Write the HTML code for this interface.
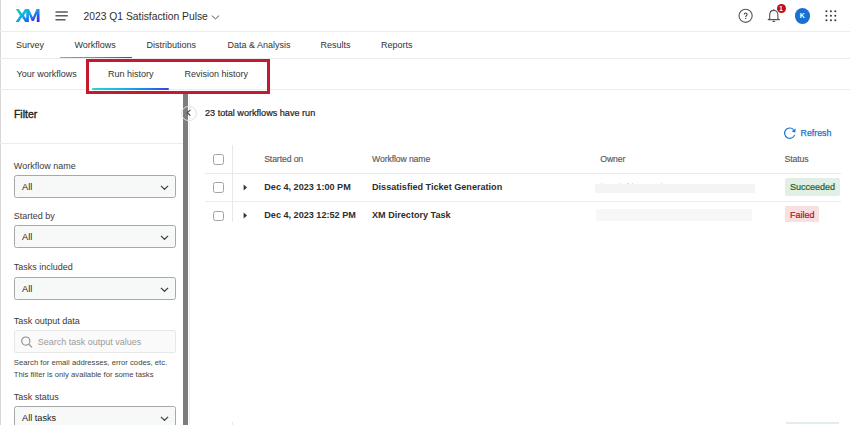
<!DOCTYPE html>
<html><head><meta charset="utf-8">
<style>
*{box-sizing:border-box;margin:0;padding:0}
html,body{width:850px;height:425px;overflow:hidden;background:#fff}
body{position:relative;font-family:"Liberation Sans",sans-serif;color:#2b2b2b}
.a{position:absolute;white-space:nowrap;line-height:1}
.hl{position:absolute;left:0;height:1px;background:#ececec}
.nav{font-size:9px;color:#333}
.lbl{font-size:9px;color:#3a3a3a}
.sel{position:absolute;left:14px;width:162.4px;background:#f7f8f8;border:1px solid #a8a8a8;border-radius:2.5px}
.sel .t{position:absolute;left:7px;font-size:9.2px;color:#222;line-height:1}
.chev{position:absolute}
.cb{position:absolute;width:11px;height:10.5px;border:1px solid #a3a3a3;border-radius:2.5px;background:#fff}
.th{font-size:8.7px;letter-spacing:-0.12px;color:#5a5a5a;-webkit-text-stroke:0.15px #5a5a5a}
.td{font-size:9.1px;color:#2e2e2e;font-weight:700}
</style></head><body>
<!-- left edge line -->
<div style="position:absolute;left:0;top:0;width:1px;height:425px;background:#d6d6d6"></div>

<!-- header -->
<svg class="a" style="left:15px;top:9px" width="26" height="14" viewBox="0 0 26 14">
 <defs><linearGradient id="xg" x1="0" y1="0" x2="1" y2="1">
  <stop offset="0" stop-color="#1ed6a0"/><stop offset="0.45" stop-color="#10a8f0"/><stop offset="1" stop-color="#4a12d8"/></linearGradient></defs>
 <path fill="url(#xg)" d="M0.8 0H3.9L7 4.7 10.1 0H13.2L9 6.5 13.4 13H10.2L7 8.3 3.8 13H0.6L5 6.5Z M11.2 0H14.1L17.8 8.6 21.5 0H24.5V13H21.8V4.9L18.9 11.9H16.7L13.9 4.9V13H11.2Z"/>
</svg>
<svg class="a" style="left:55px;top:11px" width="14" height="10" viewBox="0 0 14 10">
 <rect x="0.4" y="0.2" width="12.5" height="1.5" rx="0.5" fill="#5c5c5c"/><rect x="0.4" y="4.1" width="12.5" height="1.5" rx="0.5" fill="#5c5c5c"/><rect x="0.4" y="7.9" width="10.2" height="1.5" rx="0.5" fill="#5c5c5c"/>
</svg>
<div class="a" style="left:83.6px;top:12px;font-size:10.3px;color:#2f2f2f">2023 Q1 Satisfaction Pulse</div>
<svg class="a" style="left:210.6px;top:14.6px" width="9" height="5" viewBox="0 0 9 5"><path d="M0.8 0.6L4.5 3.9 8.1 0.6" fill="none" stroke="#555" stroke-width="1"/></svg>

<!-- header icons -->
<svg class="a" style="left:737px;top:8px" width="17" height="16" viewBox="0 0 17 16">
 <circle cx="8.6" cy="7.8" r="6.6" fill="none" stroke="#555" stroke-width="1.1"/>
 <path d="M7.2 6.5C7.2 5.5 7.8 5 8.7 5S10.1 5.6 10.1 6.4C10.1 7.5 8.7 7.6 8.7 8.9" fill="none" stroke="#444" stroke-width="1.05"/>
 <circle cx="8.7" cy="10.4" r="0.65" fill="#444"/>
</svg>
<svg class="a" style="left:767px;top:8px" width="15" height="15" viewBox="0 0 15 15">
 <path d="M2.7 10.9V7.3C2.7 4.3 4.4 2.4 6.8 2.4S10.9 4.3 10.9 7.3V10.9L12.4 11.6H1.2z" fill="none" stroke="#555" stroke-width="1.1" stroke-linejoin="round"/>
 <path d="M6.8 1.3V2.4" stroke="#555" stroke-width="1.1"/>
 <path d="M6 13.3h1.6" stroke="#555" stroke-width="1.3" stroke-linecap="round"/>
</svg>
<div class="a" style="left:776.5px;top:4.2px;width:9.2px;height:9.2px;border-radius:50%;background:#c20e1a;color:#fff;font-size:6.3px;font-weight:700;text-align:center;line-height:9.2px">1</div>
<div class="a" style="left:794.5px;top:7.8px;width:15.8px;height:15.8px;border-radius:50%;background:#1a6fd4;color:#fff;font-size:7px;font-weight:700;text-align:center;line-height:16px">K</div>
<svg class="a" style="left:825px;top:10px" width="12" height="12" viewBox="0 0 12 12" fill="#3c3c3c"><circle cx="1.4" cy="1.3" r="1.05"/><circle cx="5.9" cy="1.3" r="1.05"/><circle cx="10.3" cy="1.3" r="1.05"/><circle cx="1.4" cy="5.8" r="1.05"/><circle cx="5.9" cy="5.8" r="1.05"/><circle cx="10.3" cy="5.8" r="1.05"/><circle cx="1.4" cy="10.2" r="1.05"/><circle cx="5.9" cy="10.2" r="1.05"/><circle cx="10.3" cy="10.2" r="1.05"/></svg>
<div class="hl" style="top:31px;width:850px"></div>

<!-- nav -->
<div class="a nav" style="left:16px;top:40.5px">Survey</div>
<div class="a nav" style="left:74.5px;top:40.5px">Workflows</div>
<div class="a nav" style="left:146.5px;top:40.5px">Distributions</div>
<div class="a nav" style="left:227.5px;top:40.5px">Data &amp; Analysis</div>
<div class="a nav" style="left:320.5px;top:40.5px">Results</div>
<div class="a nav" style="left:381px;top:40.5px">Reports</div>
<div class="hl" style="top:58px;width:850px"></div>
<div class="a" style="left:59.8px;top:56.8px;width:72px;height:1.6px;border-radius:1px;background:linear-gradient(90deg,#2ed3c6,#1ab2ee 40%,#1e7ee6 75%,#4a3ad4)"></div>

<!-- subnav -->
<div class="a nav" style="left:16.5px;top:69.8px">Your workflows</div>
<div class="a nav" style="left:108px;top:69.8px">Run history</div>
<div class="a nav" style="left:184.5px;top:69.8px">Revision history</div>
<div class="hl" style="top:89px;width:850px"></div>
<div class="a" style="left:92.2px;top:88.3px;width:76.6px;height:1.6px;border-radius:1px;background:linear-gradient(90deg,#2ed3c6,#1ab2ee 40%,#1e7ee6 75%,#4a3ad4)"></div>

<!-- filter panel -->
<div class="a" style="left:13.9px;top:108.9px;font-size:10.5px;color:#222;-webkit-text-stroke:0.35px #222">Filter</div>
<div class="hl" style="top:143px;width:188px"></div>

<div class="a lbl" style="left:13.8px;top:162.2px">Workflow name</div>
<div class="sel" style="top:175px;height:23px"><span class="t" style="top:6.5px">All</span><svg class="chev" style="right:6.8px;top:8.6px" width="9" height="6" viewBox="0 0 9 6"><path d="M0.9 0.9L4.5 4.3 8.1 0.9" fill="none" stroke="#444" stroke-width="1.25"/></svg></div>
<div class="a lbl" style="left:13.8px;top:212.2px">Started by</div>
<div class="sel" style="top:225px;height:22.5px"><span class="t" style="top:6.5px">All</span><svg class="chev" style="right:6.8px;top:8.6px" width="9" height="6" viewBox="0 0 9 6"><path d="M0.9 0.9L4.5 4.3 8.1 0.9" fill="none" stroke="#444" stroke-width="1.25"/></svg></div>
<div class="a lbl" style="left:13.8px;top:263.2px">Tasks included</div>
<div class="sel" style="top:277px;height:23px"><span class="t" style="top:6.5px">All</span><svg class="chev" style="right:6.8px;top:8.6px" width="9" height="6" viewBox="0 0 9 6"><path d="M0.9 0.9L4.5 4.3 8.1 0.9" fill="none" stroke="#444" stroke-width="1.25"/></svg></div>
<div class="a lbl" style="left:13.8px;top:316.9px">Task output data</div>
<div class="a" style="left:14px;top:330px;width:162px;height:23px;background:#fafafa;border:1px solid #e8e8e8;border-radius:2px"></div>
<svg class="a" style="left:20px;top:336px" width="14" height="13" viewBox="0 0 14 13"><circle cx="5.8" cy="5.1" r="4.1" fill="none" stroke="#8a8a8a" stroke-width="1.05"/><path d="M8.8 8.2L12 11.4" stroke="#8a8a8a" stroke-width="1.1"/></svg>
<div class="a" style="left:37.8px;top:338px;font-size:9px;color:#9a9a9a">Search task output values</div>
<div class="a" style="left:13.8px;top:358.9px;font-size:7.7px;color:#444">Search for email addresses, error codes, etc.</div>
<div class="a" style="left:13.8px;top:370.5px;font-size:7.7px;color:#444">This filter is only available for some tasks</div>
<div class="a lbl" style="left:13.8px;top:393.4px">Task status</div>
<div class="sel" style="top:406px;height:23px"><span class="t" style="top:6.5px">All tasks</span><svg class="chev" style="right:6.8px;top:8.6px" width="9" height="6" viewBox="0 0 9 6"><path d="M0.9 0.9L4.5 4.3 8.1 0.9" fill="none" stroke="#444" stroke-width="1.25"/></svg></div>

<!-- scrollbar / divider -->
<div class="a" style="left:183px;top:91px;width:5px;height:334px;background:#7d7d7d"></div>
<div class="a" style="left:189px;top:91px;width:1px;height:334px;background:#f0f0f0"></div>

<!-- collapse button -->
<div class="a" style="left:181.3px;top:105.5px;width:15.4px;height:15.4px;border-radius:50%;border:1px solid #e2e2e2"></div>
<svg class="a" style="left:186px;top:109px" width="6" height="8" viewBox="0 0 6 8"><path d="M4.4 0.8L1.3 3.7 4.4 6.6" fill="none" stroke="#3a3a3a" stroke-width="1.05"/></svg>

<!-- main -->
<div class="a" style="left:205px;top:108.8px;font-size:9.1px;color:#1c1c1c;-webkit-text-stroke:0.2px #1c1c1c">23 total workflows have run</div>

<svg class="a" style="left:783px;top:127px" width="14" height="14" viewBox="0 0 14 14">
 <path d="M11.7 7.9A5.2 5.2 0 1 1 10.6 2.6" fill="none" stroke="#1a6fd4" stroke-width="1.15"/>
 <path d="M12.6 1.6L12.3 5.4 8.6 4.6z" fill="#1a6fd4"/>
</svg>
<div class="a" style="left:800.6px;top:129.2px;font-size:8.8px;color:#1a6fd4;-webkit-text-stroke:0.25px #1a6fd4">Refresh</div>

<!-- table -->
<div class="a" style="left:231.6px;top:145px;width:1.7px;height:76.5px;background:#e8e8e8"></div>
<div class="cb" style="left:213px;top:154px"></div>
<div class="a th" style="left:264.2px;top:155.2px">Started on</div>
<div class="a th" style="left:372px;top:155.2px">Workflow name</div>
<div class="a th" style="left:600.3px;top:155.2px">Owner</div>
<div class="a th" style="left:784.5px;top:155.2px">Status</div>
<div class="a" style="left:205px;top:172.5px;width:635.5px;height:1.6px;background:#e9e9e9"></div>

<div class="cb" style="left:213px;top:182.3px"></div>
<svg class="a" style="left:243px;top:184px" width="5" height="7" viewBox="0 0 5 7"><path d="M0.6 0.5L4 3.5 0.6 6.5z" fill="#333"/></svg>
<div class="a td" style="left:264.3px;top:182.9px">Dec 4, 2023 1:00 PM</div>
<div class="a td" style="left:372px;top:182.9px">Dissatisfied Ticket Generation</div>
<div class="a" style="left:595px;top:184px;width:160px;height:9px;background:#f3f4f4"></div>
<div class="a" style="left:785px;top:178px;width:54.5px;height:17.8px;background:#e1efe4;border-radius:2px"></div>
<div class="a" style="left:790px;top:183px;font-size:9px;color:#19632f;-webkit-text-stroke:0.2px #19632f">Succeeded</div>
<div class="a" style="left:205px;top:201px;width:635.5px;height:1px;background:#ececec"></div>

<div class="cb" style="left:213px;top:210.5px"></div>
<svg class="a" style="left:243px;top:212.3px" width="5" height="7" viewBox="0 0 5 7"><path d="M0.6 0.5L4 3.5 0.6 6.5z" fill="#333"/></svg>
<div class="a td" style="left:264.3px;top:211px">Dec 4, 2023 12:52 PM</div>
<div class="a td" style="left:372px;top:211px">XM Directory Task</div>
<div class="a" style="left:596px;top:209px;width:156px;height:12px;background:#f7f7f7"></div>
<div class="a" style="left:785px;top:206px;width:34px;height:15.5px;background:#f8dfe1;border-radius:2px 2px 0 0"></div>
<div class="a" style="left:790px;top:211.4px;font-size:9px;color:#b0101c;-webkit-text-stroke:0.2px #b0101c">Failed</div>

<!-- faint next-row remnants -->
<div class="a" style="left:231.6px;top:422px;width:1.7px;height:3px;background:#e8e8e8"></div>
<div class="a" style="left:786px;top:422px;width:53px;height:1.5px;background:#e3efe6"></div>
<!-- owner text remnants -->
<div class="a" style="left:601px;top:183px;width:1px;height:1px;background:#ddd"></div>
<div class="a" style="left:620px;top:183px;width:1px;height:1px;background:#ddd"></div>
<div class="a" style="left:627px;top:183px;width:2px;height:1px;background:#ddd"></div>
<div class="a" style="left:632px;top:183px;width:1px;height:1px;background:#ddd"></div>
<div class="a" style="left:661px;top:183px;width:1px;height:1px;background:#ddd"></div>
<!-- red highlight box -->
<div class="a" style="left:86px;top:59px;width:184px;height:35px;border:3px solid #c41a2e"></div>

</body></html>
